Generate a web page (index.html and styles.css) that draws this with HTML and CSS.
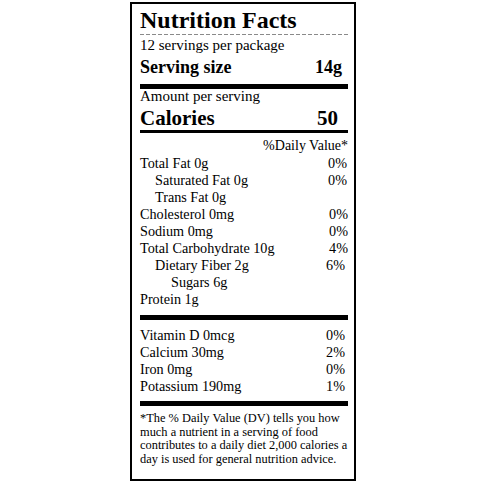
FILE: index.html
```html
<!DOCTYPE html>
<html lang="en">
<head>
    <meta charset="UTF-8">
    <title>Nutrition Facts</title>
    <link rel="stylesheet" href="styles.css">
</head>
<body>
    <div class="label">
        <h1 class="title">Nutrition Facts</h1>
        <div class="dashed"></div>
        <p class="servings">12 servings per package</p>
        <div class="row serving-size">
            <span>Serving size</span>
            <span class="pad-6">14g</span>
        </div>
        <div class="rule thick rule-serving"></div>
        <p class="amount">Amount per serving</p>
        <div class="row calories">
            <span>Calories</span>
            <span class="pad-10">50</span>
        </div>
        <div class="rule medium"></div>
        <p class="daily">%Daily Value*</p>

        <div class="nutrients">
            <div class="row"><span>Total Fat 0g</span><span class="pad-1">0%</span></div>
            <div class="row indent"><span>Saturated Fat 0g</span><span class="pad-1">0%</span></div>
            <div class="row indent"><span>Trans Fat 0g</span></div>
            <div class="row"><span>Cholesterol 0mg</span><span>0%</span></div>
            <div class="row"><span>Sodium 0mg</span><span>0%</span></div>
            <div class="row"><span>Total Carbohydrate 10g</span><span>4%</span></div>
            <div class="row indent"><span>Dietary Fiber 2g</span><span class="pad-3">6%</span></div>
            <div class="row indent-2"><span>Sugars 6g</span></div>
            <div class="row"><span>Protein 1g</span></div>
        </div>

        <div class="rule thick rule-protein"></div>

        <div class="nutrients vitamins">
            <div class="row"><span>Vitamin D 0mcg</span><span class="pad-3">0%</span></div>
            <div class="row"><span>Calcium 30mg</span><span class="pad-3">2%</span></div>
            <div class="row"><span>Iron 0mg</span><span class="pad-3">0%</span></div>
            <div class="row"><span>Potassium 190mg</span><span class="pad-3">1%</span></div>
        </div>

        <div class="rule thick rule-vitamins"></div>

        <p class="footnote">*The % Daily Value (DV) tells you how much a nutrient in a serving of food contributes to a daily diet 2,000 calories a day is used for general nutrition advice.</p>
    </div>
</body>
</html>
```

FILE: styles.css
```css
body {
    margin: 0;
    background: #fff;
    color: #000;
    font-family: "Liberation Serif", "Times New Roman", serif;
}
.label {
    box-sizing: border-box;
    width: 226px;
    height: 479px;
    margin: 2px 0 0 130px;
    padding: 3px 6px 0 8px;
    border: 2px solid #000;
}
p {
    margin: 0;
}
.title {
    margin: 0;
    font-size: 24px;
    line-height: 26px;
    font-weight: bold;
}
.dashed {
    height: 1px;
    margin-top: 1px;
    background: repeating-linear-gradient(to right, #8a8a8a 0 4px, transparent 4px 6px);
}
.servings {
    margin-top: 2px;
    font-size: 15px;
    line-height: 17px;
}
.row {
    display: flex;
    justify-content: space-between;
}
.serving-size {
    margin-top: 3px;
    font-size: 18px;
    line-height: 20px;
    font-weight: bold;
}
.rule {
    background: #000;
}
.thick {
    height: 5px;
}
.medium {
    height: 3px;
    margin-top: 1px;
}
.rule-serving {
    margin-top: 7px;
}
.amount {
    font-size: 15px;
    line-height: 15px;
}
.calories {
    margin-top: 4px;
    font-size: 21px;
    line-height: 21px;
    font-weight: bold;
}
.daily {
    margin-top: 4px;
    font-size: 14px;
    line-height: 17px;
    text-align: right;
}
.nutrients {
    margin-top: 1px;
    font-size: 14.2px;
    line-height: 17px;
}
.indent {
    padding-left: 15px;
}
.indent-2 {
    padding-left: 31px;
}
.pad-1 {
    padding-right: 1px;
}
.pad-3 {
    padding-right: 3px;
}
.pad-6 {
    padding-right: 6px;
}
.pad-10 {
    padding-right: 10px;
}
.rule-protein {
    margin-top: 7px;
}
.vitamins {
    margin-top: 7px;
}
.rule-vitamins {
    margin-top: 6px;
}
.footnote {
    margin-top: 6px;
    font-size: 12.4px;
    line-height: 13.7px;
}
```
